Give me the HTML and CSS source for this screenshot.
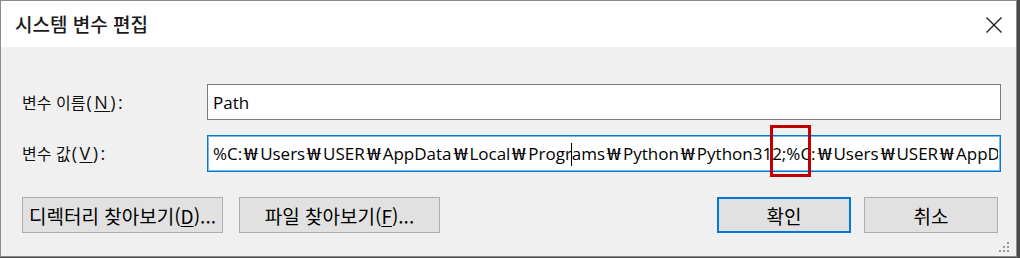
FILE: index.html
```html
<!DOCTYPE html>
<html lang="ko">
<head>
<meta charset="utf-8">
<title>시스템 변수 편집</title>
<link rel="stylesheet" href="styles.css">
</head>
<body>
<div class="window">
  <div class="titlebar">
    <span class="title">시스템 변수 편집</span>
    <span class="close" aria-label="닫기">
      <svg width="16" height="16" viewBox="0 0 16 16"><path d="M0.5 0.5 L15.5 15.5 M15.5 0.5 L0.5 15.5" stroke="#1a1a1a" stroke-width="1.3" fill="none"/></svg>
    </span>
  </div>
  <div class="content">
    <div class="row">
      <span class="label">변수 이름<span class="key">(<u>N</u>):</span></span>
      <div class="field">Path</div>
    </div>
    <div class="row">
      <span class="label">변수 값<span class="key">(<u>V</u>):</span></span>
      <div class="field focused">
        <span class="value">%C:<span class="w">₩</span>Users<span class="w">₩</span>USER<span class="w">₩</span>AppData<span class="w">₩</span>Local<span class="w">₩</span>Progr<span class="caret"></span>ams<span class="w">₩</span>Python<span class="w">₩</span>Python312;%C:<span class="w">₩</span>Users<span class="w">₩</span>USER<span class="w">₩</span>AppData<span class="w">₩</span>Local</span>
        <span class="mark"></span>
      </div>
    </div>
    <div class="buttons">
      <div class="group">
        <button class="btn wide">디렉터리 찾아보기(<u>D</u>)...</button>
        <button class="btn wide">파일 찾아보기(<u>F</u>)...</button>
      </div>
      <div class="group right">
        <button class="btn short default">확인</button>
        <button class="btn short">취소</button>
      </div>
    </div>
    <span class="grip">
      <svg width="12" height="12" viewBox="0 0 12 12" fill="#9a9a9a">
        <rect x="8" y="0" width="2" height="2"/>
        <rect x="4" y="4" width="2" height="2"/><rect x="8" y="4" width="2" height="2"/>
        <rect x="0" y="8" width="2" height="2"/><rect x="4" y="8" width="2" height="2"/><rect x="8" y="8" width="2" height="2"/>
      </svg>
    </span>
  </div>
</div>
</body>
</html>
```

FILE: styles.css
```css
* { box-sizing: border-box; }
html, body { margin: 0; padding: 0; }
body {
  width: 1020px;
  height: 258px;
  background: #4a4a4a;
  overflow: hidden;
  font-family: "Open Sans", "Noto Sans CJK KR", sans-serif;
  color: #000;
}
.window {
  width: 1017px;
  height: 257px;
  border: 1px solid #8c8c8c;
  background: #f0f0f0;
  display: flex;
  flex-direction: column;
}
.titlebar {
  height: 46px;
  background: #fff;
  display: flex;
  align-items: center;
  justify-content: space-between;
  padding: 0 12px 0 14px;
}
.title {
  font-family: "Noto Sans CJK KR", sans-serif;
  font-size: 19px;
  font-weight: 500;
  color: #1a1a1a;
  padding-bottom: 2px;
}
.close { display: flex; width: 16px; height: 16px; margin-right: 2px; margin-top: 2px; }
.content {
  flex: 1;
  position: relative;
  padding: 37px 15px 0 21px;
}
.row {
  display: flex;
  align-items: center;
  height: 36px;
  margin-bottom: 15px;
}
.label {
  flex: 0 0 185px;
  white-space: nowrap;
  font-family: "Noto Sans CJK KR", sans-serif;
  font-size: 16px;
  color: #111;
}
.key {
  font-family: "Open Sans", sans-serif;
  font-size: 18px;
  letter-spacing: 2.5px;
  margin-left: 1px;
}
.label u { text-underline-offset: 2px; }
.field {
  flex: 1;
  min-width: 0;
  height: 36px;
  border: 1px solid #7a7a7a;
  background: #fff;
  display: flex;
  align-items: center;
  padding: 0 2px 0 5px;
  font-size: 17px;
  white-space: nowrap;
  overflow: hidden;
  position: relative;
}
.field.focused {
  height: 37px;
  border-color: #0078d7;
  box-shadow: inset 0 0 0 1px #7db8ea;
  overflow: visible;
}
.value {
  display: block;
  flex: 1;
  min-width: 0;
  overflow: hidden;
}
.w {
  display: inline-block;
  width: 17.9px;
  text-align: center;
  transform: scaleX(1.45);
}
.caret {
  display: inline-block;
  width: 0;
  height: 23px;
  border-left: 1px solid #000;
  vertical-align: middle;
  margin: 0 -0.5px;
}
.mark {
  position: absolute;
  left: 562px;
  top: -11px;
  width: 41px;
  height: 52px;
  border: 3px solid #c00000;
}
.buttons {
  display: flex;
  justify-content: space-between;
  margin-top: 26px;
  padding-right: 3px;
}
.group { display: flex; gap: 16px; }
.group.right { gap: 13px; }
.btn {
  height: 36px;
  background: #e1e1e1;
  border: 1px solid #adadad;
  font-family: "Noto Sans CJK KR", sans-serif;
  font-size: 19px;
  color: #000;
  padding: 0;
}
.btn u { text-underline-offset: 2px; }
.btn.wide { width: 201px; }
.btn.short { width: 134px; }
.btn.default { border: 2px solid #0078d7; }
.grip {
  position: absolute;
  right: 5px;
  bottom: 2px;
  display: flex;
}
```
